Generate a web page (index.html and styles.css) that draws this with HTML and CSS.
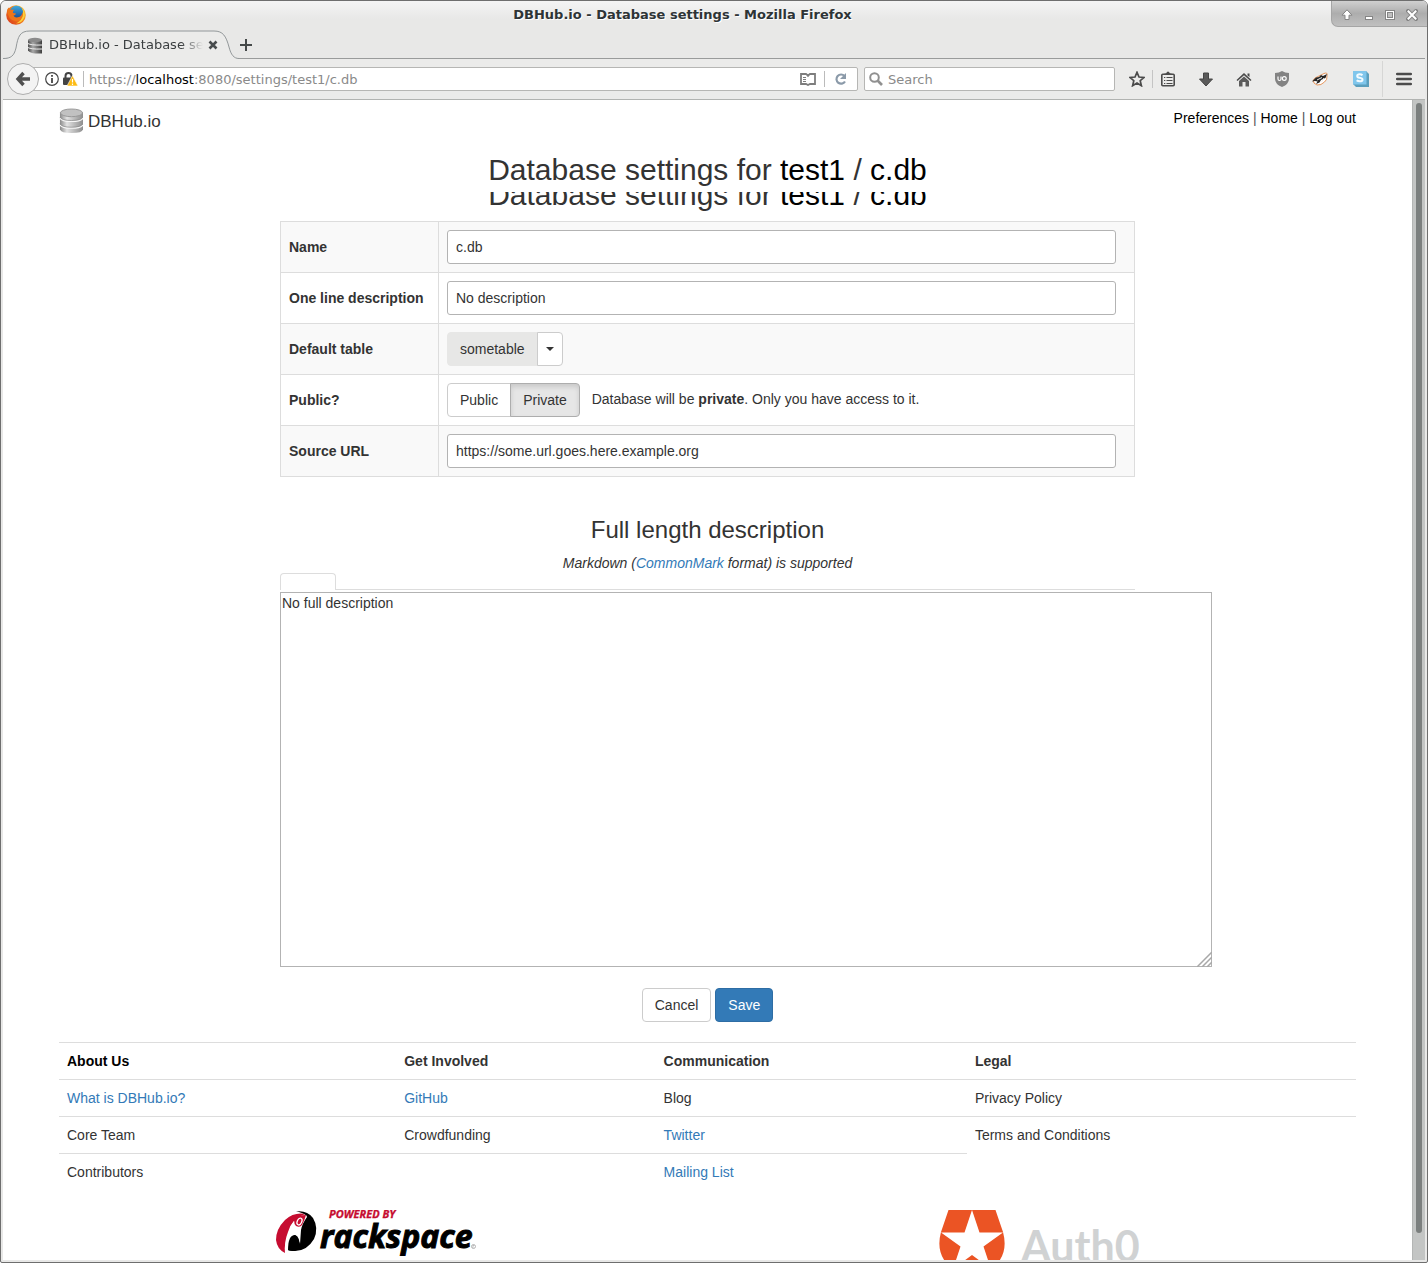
FILE: index.html
```
<!DOCTYPE html>
<html lang="en">
<head>
<meta charset="utf-8">
<title>DBHub.io - Database settings</title>
<link rel="stylesheet" href="styles.css">
</head>
<body>
<svg class="defs" aria-hidden="true">
  <defs>
    <linearGradient id="metal"><stop offset="0" stop-color="#8a8a8a"/><stop offset=".3" stop-color="#e2e2e2"/><stop offset="1" stop-color="#8e8e8e"/></linearGradient>
    <linearGradient id="darkmetal"><stop offset="0" stop-color="#4b4b4b"/><stop offset=".35" stop-color="#a8a8a8"/><stop offset="1" stop-color="#3e3e3e"/></linearGradient>
    <linearGradient id="fire" x1="0" y1="1" x2="1" y2="0"><stop offset="0" stop-color="#d6301c"/><stop offset=".5" stop-color="#f1791a"/><stop offset="1" stop-color="#fcd63c"/></linearGradient>
    <linearGradient id="globe" x1="0" y1="0" x2="0" y2="1"><stop offset="0" stop-color="#3fa9dd"/><stop offset="1" stop-color="#123f8c"/></linearGradient>
  </defs>
</svg>
<div class="window">
  <header class="titlebar">
    <svg class="app-icon" width="20" height="20" viewBox="0 0 20 20"><circle cx="10" cy="10" r="9.800" fill="url(#fire)"/><circle cx="10.500" cy="8" r="7.200" fill="url(#globe)"/><path d="M1 5 L2.500 2.500 L4 5 Q6 4 8 5 Q6.500 6.500 7 8 L10 8.500 Q9.500 10.300 7.500 10.500 Q8.500 13 12 12.300 Q16 11.500 16.500 7 Q17.500 9 17 11.500 Q14.500 17 9 16 Q2 14.500 1 5Z" fill="#ee7519"/><path d="M16 3 Q19.500 7 18.500 12 Q16 18.500 10 18.500 Q16.500 15 17 10 Q17.500 6 16 3Z" fill="#fbd23a"/></svg>
    <div class="window-title">DBHub.io - Database settings - Mozilla Firefox</div>
    <div class="window-controls">
      <button type="button" aria-label="Shade"><svg width="12" height="12" viewBox="0 0 12 12"><path d="M6 .8 L11 6.200 H8 V10.500 H4 V6.200 H1Z" fill="#fff" stroke="#858585"/></svg></button>
      <button type="button" aria-label="Minimize"><svg width="12" height="12" viewBox="0 0 12 12"><rect x="2.500" y="7.500" width="7" height="3" fill="#fff" stroke="#858585"/></svg></button>
      <button type="button" aria-label="Maximize"><svg width="12" height="12" viewBox="0 0 12 12"><rect x="1.500" y="1.500" width="9" height="9" fill="#fff" stroke="#858585"/><rect x="3.500" y="3.500" width="5" height="5" fill="#c0c0c0" stroke="#858585"/></svg></button>
      <button type="button" aria-label="Close"><svg width="12" height="12" viewBox="0 0 12 12"><path d="M2 2 L10 10 M10 2 L2 10" stroke="#858585" stroke-width="4" stroke-linecap="square"/><path d="M1.800 1.800 L10.200 10.200 M10.200 1.800 L1.800 10.200" stroke="#fff" stroke-width="2"/></svg></button>
    </div>
  </header>

  <div class="tabstrip">
    <div class="tab">
      <svg class="tab-shape" width="236" height="30" viewBox="0 0 236 30"><path d="M0 28.500 C8 28.500 11 26 13 18 C15 6 17 1 27 1 H211 C220 1 223 6 226 17 C228 25 231 28.500 236 28.500 V30 H0Z" fill="#ebebea"/><path d="M0 28.500 C8 28.500 11 26 13 18 C15 6 17 1 27 1 H211 C220 1 223 6 226 17 C228 25 231 28.500 236 28.500" fill="none" stroke="#929799"/></svg>
      <svg class="favicon" width="16" height="17" viewBox="0 0 16 17"><path d="M1 3 V13.500 Q3 16 8.500 16.500 H15 V3Z" fill="url(#darkmetal)"/><ellipse cx="8" cy="3" rx="7" ry="2.200" fill="#8b8b8b"/><path d="M0 6 Q3 8.500 15 8 M0 10 Q3 12.500 15 12" fill="none" stroke="#eee" stroke-width="1"/></svg>
      <span class="tab-title">DBHub.io - Database settings</span>
      <button class="tab-close" type="button" aria-label="Close tab"><svg width="10" height="10" viewBox="0 0 10 10"><path d="M1.500 1.500 L8.500 8.500 M8.500 1.500 L1.500 8.500" stroke="#474b4c" stroke-width="2.600"/></svg></button>
    </div>
    <button class="new-tab" type="button" aria-label="New tab"><svg width="14" height="14" viewBox="0 0 14 14"><path d="M7 1 V13 M1 7 H13" stroke="#454949" stroke-width="2"/></svg></button>
  </div>

  <nav class="toolbar" aria-label="Browser">
    <button class="back" type="button" aria-label="Back"><svg width="16" height="16" viewBox="0 0 16 16"><path d="M8.500 2 L3 8 L8.500 14 M3 8 H15" fill="none" stroke="#505050" stroke-width="3.400"/></svg></button>
    <div class="urlbar">
      <svg width="14" height="14" viewBox="0 0 14 14"><circle cx="7" cy="7" r="6.300" fill="none" stroke="#444" stroke-width="1.200"/><path d="M7 6 V11 M7 3 V4.800" stroke="#444" stroke-width="1.800"/></svg>
      <svg width="15" height="14" viewBox="0 0 15 14"><path d="M2.500 7 V4 A3 3 0 0 1 8.500 4 V7" fill="none" stroke="#444" stroke-width="2"/><rect x="0" y="5.500" width="10" height="7.500" rx="1" fill="#444"/><path d="M9.500 3.500 L15 14 H4Z" fill="#fdbb12" stroke="#fff" stroke-width=".6"/><path d="M9.500 7 V10.500 M9.500 11.500 V13" stroke="#fff" stroke-width="1.200"/></svg>
      <div class="url">https://<b>localhost</b>:8080/settings/test1/c.db</div>
      <svg class="reader" width="16" height="13" viewBox="0 0 16 13"><path d="M1 1 H6 L8 2.500 L10 1 H15 V11 H10 L8 12 L6 11 H1Z" fill="none" stroke="#7d7d7d" stroke-width="1.800"/><path d="M3 4.500 H6 M3 6.500 H6 M3 8.500 H6 M8 2.500 V4" stroke="#7d7d7d"/></svg>
      <svg class="reload" width="33" height="16" viewBox="0 0 33 16"><path d="M.5 0 V16" stroke="#bbb"/><path d="M20.500 5 A4.600 4.600 0 1 0 21 10.500" fill="none" stroke="#8b9aa9" stroke-width="2.200"/><path d="M22 2 V8 H16Z" fill="#8b9aa9"/></svg>
    </div>
    <div class="searchbar">
      <svg width="14" height="14" viewBox="0 0 14 14"><circle cx="5.500" cy="5.500" r="4.300" fill="none" stroke="#909090" stroke-width="2"/><path d="M8.500 8.500 L13 13" stroke="#909090" stroke-width="2.600"/></svg>
      <input type="text" placeholder="Search" aria-label="Search">
    </div>
    <div class="tools">
      <button class="star" type="button" aria-label="Bookmark"><svg width="16" height="16" viewBox="0 0 16 16"><path d="M8 1.300 L10 6 L15 6.400 L11.200 9.700 L12.400 14.700 L8 12 L3.600 14.700 L4.800 9.700 L1 6.400 L6 6Z" fill="none" stroke="#4b4b4b" stroke-width="1.700"/></svg></button>
      <button type="button" aria-label="Bookmarks list"><svg width="14" height="16" viewBox="0 0 14 16"><rect x=".8" y="3.300" width="12.400" height="11.400" rx="1" fill="none" stroke="#4b4b4b" stroke-width="1.600"/><path d="M3.500 4 V2.500 H5 Q7 -1.500 9 2.500 H10.500 V4Z" fill="#4b4b4b"/><path d="M3 6.500 H4.300 M3 9.500 H4.300 M3 12.500 H4.300 M5.500 6.500 H11.500 M5.500 9.500 H11.500 M5.500 12.500 H11.500" stroke="#4b4b4b" stroke-width="1"/></svg></button>
      <button type="button" aria-label="Downloads"><svg width="14" height="15" viewBox="0 0 14 15"><path d="M4.500 1 H9.500 V7 H13.500 L7 14 L.5 7 H4.500Z" fill="#5a5a5a" stroke="#454545"/></svg></button>
      <button type="button" aria-label="Home"><svg width="16" height="15" viewBox="0 0 16 15"><path d="M8 1 L15.500 8 L14.500 9 L8 3.300 L1.500 9 L.5 8Z M11.500 1.500 H13.500 V5 L11.500 3.500Z" fill="#4b4b4b"/><path d="M3 9 L8 4.600 L13 9 V14.500 H9.500 V10 H6.500 V14.500 H3Z" fill="#5c5c5c"/></svg></button>
      <button type="button" aria-label="uBlock"><svg width="14" height="16" viewBox="0 0 14 16"><path d="M7 0 Q10 1.800 14 2 V8 Q14 13 7 16 Q0 13 0 8 V2 Q4 1.800 7 0Z" fill="#838383"/><path d="M3 5.500 V8 Q3 9.500 4.500 9.500 Q6 9.500 6 8 V5.500" fill="none" stroke="#fff" stroke-width="1.200"/><circle cx="9.300" cy="7.500" r="1.900" fill="none" stroke="#fff" stroke-width="1.200"/></svg></button>
      <button type="button" aria-label="Privacy Badger"><svg width="16" height="14" viewBox="0 0 16 14"><path d="M2 11 Q0 8 3 6 L7 4 L12 1.500 Q16 0 15 3.500 Q15.500 8 12.500 10 Q9 13.500 5 13Z" fill="#fff" stroke="#e38a4b" stroke-width=".9"/><path d="M0 9.500 L4 5.500 L7 5 L9 3 L11 4 L15 2 L13.500 6 L9 8 L7.500 10.500 L4 12 L5.500 9.500 L3 9Z" fill="#262626"/><path d="M5 8 L10 5.500 M12 6 L9.500 10" stroke="#eee" stroke-width="1"/></svg></button>
      <button class="wide" type="button" aria-label="Stylish"><svg width="16" height="16" viewBox="0 0 16 16"><path d="M0 0 H13 L16 3 V16 H3 L0 13Z" fill="#5b9fbd"/><rect width="13.500" height="13.500" fill="#80c6ec"/><path d="M9.500 4.200 Q8.500 3.200 6.700 3.200 Q4.200 3.200 4.200 4.900 Q4.200 6.400 6.700 6.800 Q9.500 7.200 9.500 8.700 Q9.500 10.300 6.800 10.300 Q4.800 10.300 3.700 9.200" fill="none" stroke="#f3fbff" stroke-width="2"/></svg></button>
      <button class="menu" type="button" aria-label="Menu"><svg width="16" height="14" viewBox="0 0 16 14"><path d="M1.200 2 H14.800 M1.200 7 H14.800 M1.200 12 H14.800" stroke="#4b4b4b" stroke-width="2.600" stroke-linecap="round"/></svg></button>
    </div>
  </nav>

  <div class="viewport">
    <div class="page">
      <header class="site-header">
        <a class="brand" href="#">
          <svg width="24" height="26" viewBox="-1 0 25 26"><path d="M0 4 V21.500 Q1 25.500 12 25.500 Q23 25.500 24 21.500 V4Z" fill="url(#metal)"/><path d="M0 10 Q2 13.500 12 13.500 Q22 13.500 24 10 M0 17 Q2 20.500 12 20.500 Q22 20.500 24 17" fill="none" stroke="#f6f6f6" stroke-width="1.300"/><path d="M0 9 Q2 12.500 12 12.500 Q22 12.500 24 9 M0 16 Q2 19.500 12 19.500 Q22 19.500 24 16" fill="none" stroke="#888" stroke-width=".7"/><ellipse cx="12" cy="4.500" rx="11.500" ry="4" fill="#c1c1c1" stroke="#989898"/></svg>
          <span>DBHub.io</span>
        </a>
        <div class="site-nav"><a href="#">Preferences</a> | <a href="#">Home</a> | <a href="#">Log out</a></div>
      </header>

      <main class="settings">
        <h1>Database settings for <a href="#">test1</a> / <a href="#">c.db</a></h1>
        <div class="heading-echo" aria-hidden="true"><div>Database settings for <b>test1</b> / <b>c.db</b></div></div>

        <form>
          <table class="fields">
            <tr><th><label for="name">Name</label></th><td><input id="name" type="text" value="c.db"></td></tr>
            <tr><th><label for="oneline">One line description</label></th><td><input id="oneline" type="text" value="No description"></td></tr>
            <tr><th>Default table</th><td><div class="group"><button class="btn selected-table" type="button">sometable</button><button class="btn toggle" type="button" aria-label="Choose table"><i class="caret"></i></button></div></td></tr>
            <tr><th>Public?</th><td><div class="group"><button class="btn" type="button">Public</button><button class="btn active" type="button">Private</button><span class="hint">Database will be <b>private</b>. Only you have access to it.</span></div></td></tr>
            <tr><th><label for="source">Source URL</label></th><td><input id="source" type="text" value="https://some.url.goes.here.example.org"></td></tr>
          </table>

          <h2><label for="full">Full length description</label></h2>
          <p class="note">Markdown (<a href="#">CommonMark</a> format) is supported</p>
          <div class="nav-tabs"><span></span></div>
          <div class="editor">
            <textarea id="full">No full description</textarea>
            <svg class="grip" width="15" height="15" viewBox="0 0 15 15"><path d="M0 15 L15 0 M5 15 L15 5 M10 15 L15 10" stroke="#a8a8a8" stroke-width="1.500"/></svg>
          </div>
          <div class="actions"><button class="btn" type="button">Cancel</button><button class="btn primary" type="submit">Save</button></div>
        </form>
      </main>

      <footer>
        <table class="links">
          <colgroup><col class="c1"><col class="c2"><col class="c3"><col class="c4"></colgroup>
          <tr><th class="dark">About Us</th><th>Get Involved</th><th>Communication</th><th>Legal</th></tr>
          <tr><td><a href="#">What is DBHub.io?</a></td><td><a href="#">GitHub</a></td><td>Blog</td><td>Privacy Policy</td></tr>
          <tr><td>Core Team</td><td>Crowdfunding</td><td><a href="#">Twitter</a></td><td>Terms and Conditions</td></tr>
          <tr><td>Contributors</td><td></td><td><a href="#">Mailing List</a></td></tr>
        </table>
        <div class="sponsors">
          <svg width="200" height="46" viewBox="0 0 200 46">
            <path d="M20 1.500 Q31 0 37 8 Q43 18 38 29 Q31 41 19 41 Q13 41 12 40 L14 32 Q22 18 31 6 Q26 2 20 1.500Z" fill="#000"/>
            <path d="M29 4 Q18 2 9 10 Q0 19 0 30 Q1 39 9 43 Q8 34 13 24 Q14 10 29 4Z" fill="#c60c30"/>
            <path d="M12 22 Q16 8 29 5 L31 7 Q26 14 25 20 L24 34 L21 27 Q18 22 14 29 L12 41 L9 43 Q8 32 12 22Z" fill="#fff"/>
            <path d="M12 40 Q12 25 19 25 Q24 26 24 39 Q18 42 12 40Z" fill="#000"/>
            <path d="M18 10 Q22 5 30 5 Q29 9 26 15 Q24 18 20 16 Q18 14 18 10Z" fill="#c60c30"/>
            <ellipse cx="23.500" cy="11.500" rx="2.200" ry="3.600" transform="rotate(25 23.500 11.500)" fill="#c60c30" stroke="#fff" stroke-width="1.300"/>
            <text x="53" y="8" class="powered">POWERED BY</text>
            <text x="44" y="38" class="rackspace">rackspace</text>
            <circle cx="197.500" cy="36.500" r="2" fill="none" stroke="#999" stroke-width=".7"/><path d="M197 38 V35.500 H198.200" fill="none" stroke="#999" stroke-width=".6"/>
          </svg>
          <svg width="201" height="74" viewBox="0 0 201 74">
            <path d="M9.500 0 H56.500 L64 22 Q71 48 48 62 L33 73 L18 62 Q-5 48 2 22Z" fill="#eb5424"/>
            <path d="M33 0 L40.500 22.500 H64 L44.500 36.500 L52 59 L33 45 L14 59 L21.500 36.500 L2 22.500 H25.500Z" fill="#fff"/>
            <text x="82" y="52" class="auth">Auth0</text>
          </svg>
        </div>
      </footer>
    </div>
    <div class="scrollbar"><div class="thumb"></div></div>
  </div>
</div>
</body>
</html>
```
FILE: styles.css
```
* { box-sizing: border-box; }
body {
  margin: 0;
  background: #fff;
  color: #333;
  font: 14px/20px "Liberation Sans", Arial, sans-serif;
}
button, input, textarea { font: inherit; color: inherit; margin: 0; }
a { color: #337ab7; text-decoration: none; }
svg { display: block; flex: none; }
.defs { position: absolute; width: 0; height: 0; }

/* Window frame */
.window {
  height: 100vh;
  display: flex;
  flex-direction: column;
  overflow: hidden;
  border: 1px solid #6e6e6e;
  border-radius: 6px 6px 2px 2px;
  background: #e8e8e7;
  font-family: "DejaVu Sans", sans-serif;
  font-size: 13px;
}
.titlebar {
  flex: none;
  display: flex;
  height: 29px;
  padding-left: 5px;
  background: linear-gradient(#f4f4f4, #e8e8e7 18px);
}
.app-icon { margin-top: 4px; }
.window-title {
  flex: 1;
  padding: 4px 0 0 8px;
  text-align: center;
  font-weight: bold;
  color: #2e3436;
  text-shadow: 1px 1px #fff;
}
.window-controls {
  display: flex;
  width: 96px;
  height: 26px;
  padding: 0 4px;
  border: 1px solid #a5a5a5;
  border-width: 0 0 1px 1px;
  border-bottom-left-radius: 7px;
  background: linear-gradient(#d0d0d0, #adadad 50%, #c0c0c0);
}
.window-controls button, .tools button, .tab-close, .new-tab {
  display: flex;
  align-items: center;
  justify-content: center;
  padding: 0;
  border: 0;
  background: none;
}
.window-controls button { flex: 1; height: 28px; }

/* Tabs */
.tabstrip {
  flex: none;
  display: flex;
  height: 29px;
  margin: 0 2px;
  border-bottom: 1px solid #999b9b;
}
.tab {
  position: relative;
  display: flex;
  align-items: center;
  width: 236px;
  height: 30px;
  padding-left: 24px;
  color: #3a3e40;
}
.tab-shape { position: absolute; left: 0; top: 0; }
.favicon, .tab-title, .tab-close { position: relative; }
.tab-title {
  width: 154px;
  margin-left: 6px;
  overflow: hidden;
  white-space: nowrap;
  mask-image: linear-gradient(90deg, #000 132px, transparent);
}
.tab-close { width: 20px; height: 20px; }
.new-tab { width: 14px; height: 30px; }

/* Toolbar */
.toolbar {
  flex: none;
  display: flex;
  align-items: center;
  height: 41px;
  margin: 0 2px;
  padding-left: 4px;
  border-bottom: 1px solid #b1b3b1;
  background: #ebebea;
}
.back {
  z-index: 1;
  display: flex;
  align-items: center;
  justify-content: center;
  width: 32px;
  height: 32px;
  padding: 0;
  border: 1px solid #adadad;
  border-radius: 50%;
  background: #f3f3f3;
}
.urlbar, .searchbar {
  display: flex;
  align-items: center;
  height: 24px;
  border: 1px solid #b6b6b4;
  border-radius: 2px;
  background: #fff;
}
.urlbar {
  flex: 1;
  gap: 4px;
  margin-left: -13px;
  padding-left: 18px;
}
.url {
  flex: 1;
  height: 16px;
  line-height: 18px;
  margin-left: 1px;
  padding-left: 5px;
  border-left: 1px solid #bbb;
  color: #8a8a8a;
}
.url b { font-weight: normal; color: #000; }
.reload { margin-left: 4px; }
.searchbar { width: 251px; margin-left: 6px; padding-left: 4px; }
.searchbar input {
  flex: 1;
  min-width: 0;
  padding: 2px 5px 0;
  border: 0;
  background: none;
}
.searchbar input::placeholder { color: #8a8a8a; opacity: 1; }
.tools { display: flex; align-items: center; gap: 8px; }
.tools button { width: 30px; height: 36px; }
.tools .star {
  width: 32px;
  height: 18px;
  margin: 0 -8px 0 6px;
  border-right: 1px solid #c4c4c4;
}
.tools .wide { width: 36px; }
.tools .menu { width: 43px; margin-left: -5px; border-left: 1px solid #d6d6d5; }

/* Page area */
.viewport {
  flex: 1;
  min-height: 0;
  display: flex;
  overflow: hidden;
  margin: 0 2px 2px;
  background: #fff;
  font: 14px/20px "Liberation Sans", Arial, sans-serif;
}
.page { flex: 1; min-width: 0; padding: 0 56px; }
.scrollbar {
  width: 13px;
  padding: 3px 3px 27px;
  border-left: 1px solid #b4b6b5;
  background: #c3c5c4;
}
.thumb { width: 6px; height: 100%; border-radius: 3px; background: #7b7f7e; }

.site-header { display: flex; justify-content: space-between; height: 53px; padding-top: 8px; }
.brand { display: flex; align-items: center; gap: 5px; height: 26px; color: #333; font-size: 17px; line-height: 20px; }
.brand span { padding-top: 2px; }
.site-nav { color: #555; }
.site-nav a { color: #000; }

.settings { padding: 0 221px; }
h1, .heading-echo { margin: 0; font-size: 30px; font-weight: normal; line-height: 33px; text-align: center; }
h1 a, .heading-echo b { color: #000; font-weight: normal; }
.heading-echo {
  display: flex;
  align-items: flex-end;
  justify-content: center;
  height: 19px;
  margin: 6px 0 10px;
  overflow: hidden;
}

table { width: 100%; border-collapse: collapse; }
th { text-align: left; }
.fields th, .fields td { height: 51px; padding: 8px; border: 1px solid #ddd; }
.fields th { width: 158px; white-space: nowrap; }
.fields td { padding-right: 18px; }
.fields tr:nth-child(odd) { background: #f9f9f9; }
.fields input {
  display: block;
  width: 100%;
  height: 34px;
  padding: 0 8px;
  border: 1px solid #b3b3b3;
  border-radius: 3px;
  background: #fff;
}

.btn {
  height: 34px;
  padding: 0 12px;
  border: 1px solid #ccc;
  border-radius: 4px;
  background: #fff;
}
.primary { border-color: #2e6da4; background: #337ab7; color: #fff; }
.group { display: flex; }
.group .btn:first-child { border-radius: 4px 0 0 4px; }
.group .btn:nth-child(2) { margin-left: -1px; border-radius: 0 4px 4px 0; }
.group .selected-table { border-color: #e7e7e6; background: #e7e7e6; }
.group .toggle { padding: 0 8px; }
.group .active {
  border-color: #adadad;
  background: #e6e6e6;
  box-shadow: inset 0 3px 5px rgba(0, 0, 0, .125);
}
.caret { display: block; border: 4px solid transparent; border-top-color: #333; border-bottom: 0; }
.hint { padding: 6px 12px; }

h2 { margin: 40px 0 10px; font-size: 24px; font-weight: normal; line-height: 26px; text-align: center; }
.note { margin: 0; text-align: center; font-style: italic; }
.nav-tabs { display: flex; height: 17px; }
.nav-tabs span { width: 56px; border: 1px solid #ddd; border-bottom: 0; border-radius: 4px 4px 0 0; }
.nav-tabs::after { content: ""; flex: 1; border-bottom: 1px solid #ddd; }
.editor { position: relative; width: calc(100% + 77px); margin-top: 2px; }
textarea {
  display: block;
  width: 100%;
  height: 375px;
  padding: 0 1px;
  border: 1px solid #b3b3b3;
  background: #fff;
  resize: none;
}
.grip { position: absolute; right: 0; bottom: 0; }
.actions { display: flex; justify-content: center; gap: 4px; margin: 21px 0 20px; }

.links { table-layout: fixed; }
.links th, .links td { height: 37px; padding: 8px; border-top: 1px solid #ddd; }
.links .dark { color: #000; }
.c1 { width: 26%; }
.c2 { width: 20%; }
.c3 { width: 24%; }
.sponsors {
  display: grid;
  grid-template-columns: 1fr 1fr;
  justify-items: center;
  margin: 19px -15px 0;
}
.powered { font: italic bold 11px "Open Sans", sans-serif; fill: #c60c30; stroke: #c60c30; stroke-width: .3px; }
.rackspace { font: italic bold 32px "Open Sans", sans-serif; fill: #000; stroke: #000; stroke-width: 1px; }
.auth { font: bold 43px Lato, sans-serif; fill: #d0d2d3; }
```
